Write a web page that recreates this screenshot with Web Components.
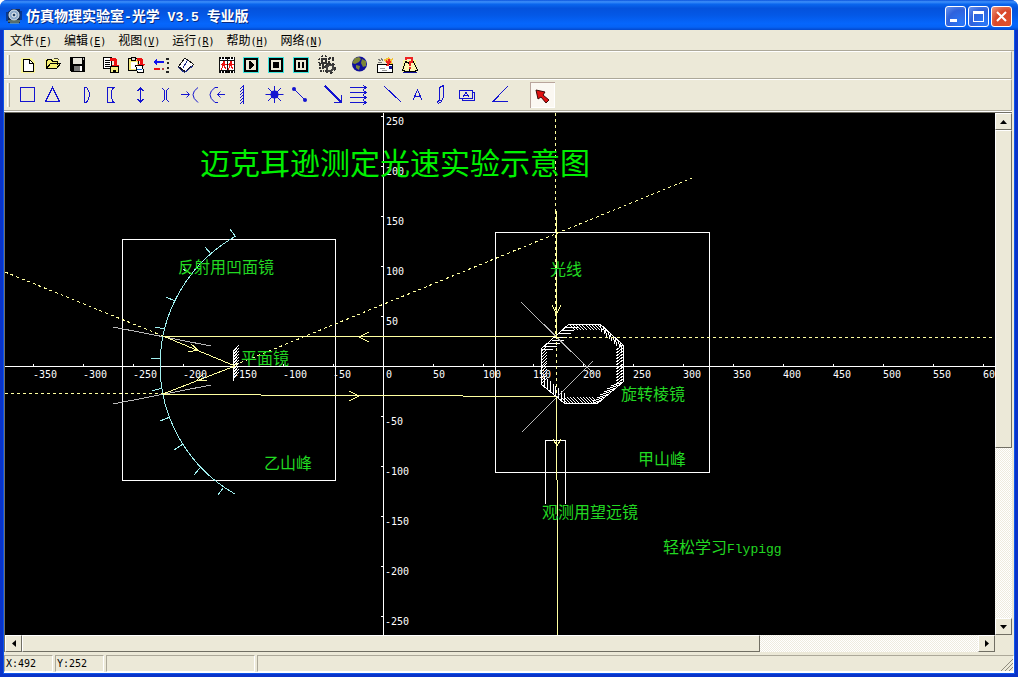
<!DOCTYPE html>
<html lang="zh-CN">
<head>
<meta charset="utf-8">
<title>仿真物理实验室-光学 V3.5 专业版</title>
<style>
html,body{margin:0;height:100%;background:#fff;overflow:hidden}
body{font:12px/16px "Noto Sans CJK SC",sans-serif;color:#000;
  --face:#ece9d8;--shade:#aca899;--dark:#716f64;--light:#fff;--mono:"DejaVu Sans Mono",monospace}
</style>
</head>
<body>
<lab-window>
  <title-bar slot="title">仿真物理实验室<span class="latin">-</span>光学<span class="latin"> V3.5 </span>专业版</title-bar>
  <menu-bar slot="bars">
    <menu-entry key="F">文件</menu-entry>
    <menu-entry key="E">编辑</menu-entry>
    <menu-entry key="V">视图</menu-entry>
    <menu-entry key="R">运行</menu-entry>
    <menu-entry key="H">帮助</menu-entry>
    <menu-entry key="N">网络</menu-entry>
  </menu-bar>
  <tool-strip slot="bars" label="标准" icons="new open save - copy paste step book = film play stop pause gears - globe mail help"></tool-strip>
  <tool-strip slot="bars" class="tall" label="元件" icons="square prism - convex concave . thick thin mirrorin mirrorout plane - sun segment - ray rays - line text pen tag - angle = pointer"></tool-strip>
  <scroll-pane><optics-canvas></optics-canvas></scroll-pane>
  <status-bar slot="status"></status-bar>
</lab-window>

<script>
const define = (name, html, setup) => customElements.define(name, class extends HTMLElement {
  connectedCallback() {
    if (this.shadowRoot) return;
    const t = document.createElement('template');
    t.innerHTML = typeof html === 'function' ? html(this) : html;
    this.attachShadow({mode: 'open'}).append(t.content.cloneNode(true));
    if (setup) setup(this.shadowRoot, this);
  }
});

define('lab-window', `
<style>
:host{display:flex;flex-direction:column;height:100vh;box-sizing:border-box;overflow:hidden;
  border-radius:7px 7px 0 0;background:#0a4ae0}
.body{flex:1;min-height:0;margin:0 4px 4px;display:flex;flex-direction:column;background:var(--face);
  box-shadow:0 0 0 1px #0e55ea,0 0 0 4px #0a33c8}
.view{flex:1;min-height:0;margin:1px 2px 3px 0;display:flex;border:1px solid var(--dark);border-right:0;border-bottom:0}
::slotted(scroll-pane){flex:1}
</style>
<slot name="title"></slot>
<div class="body"><slot name="bars"></slot><div class="view"><slot></slot></div><slot name="status"></slot></div>`);

define('title-bar', `
<style>
:host{display:flex;align-items:center;height:30px;padding:2px 6px 0 6px;box-sizing:border-box;position:relative;z-index:1;
  background:linear-gradient(#0a52dc 0,#3e90fa 6%,#0a66ee 14%,#0452dc 28%,#0458e6 50%,#0566fc 78%,#0563f6 90%,#0348cc 100%)}
h1{flex:1;margin:0 0 0 4px;font:bold 14px/20px "Noto Sans CJK SC",sans-serif;color:#fff;text-shadow:1px 1px #0a2a80;white-space:pre}
::slotted(.latin){font:bold 13px/20px "Liberation Mono",monospace}
button{width:21px;height:21px;margin-left:2px;padding:0;border:1px solid #fff;border-radius:3px;
  background:radial-gradient(circle at 80% 85%,#2a78f8,#2f62dc 60%,#6b95ee)}
button.close{background:radial-gradient(circle at 80% 85%,#e0502a,#d8482a 55%,#ee9a80)}
svg{display:block}
</style>
<svg width="16" height="16" aria-hidden="true"><path d="M2 15V4l4-3h8v14z" fill="#172c50"/><circle cx="8" cy="7" r="5" fill="#8aa8c8" stroke="#dce8f0"/><circle cx="8" cy="7" r="2" fill="#246" stroke="#fff"/><path d="M2 13h12M4 15h9" stroke="#9ab08a"/><path d="M1 4v9M15 3v9" stroke="#0b1838"/></svg>
<h1><slot></slot></h1>
<button aria-label="最小化"><svg width="19" height="19"><path d="M4 12h7v3H4z" fill="#fff"/></svg></button>
<button aria-label="最大化"><svg width="19" height="19"><path d="M4 4h11v11H4zM5 7v7h9V7z" fill="#fff" fill-rule="evenodd"/></svg></button>
<button class="close" aria-label="关闭"><svg width="19" height="19"><path d="M5 5l9 9M14 5l-9 9" stroke="#fff" stroke-width="2"/></svg></button>`);

define('menu-bar', `
<style>:host{display:block;height:20px;border-bottom:1px solid var(--shade)}nav{display:flex}</style>
<nav><slot></slot></nav>`);

define('menu-entry', el => `
<style>
button{height:20px;padding:0 6px;border:0;background:none;color:#000;font:12px/20px "Noto Sans CJK SC",sans-serif;white-space:nowrap}
span{font:10px/20px var(--mono)}u{font-family:inherit}
</style>
<button><slot></slot><span>(<u>${el.getAttribute('key')}</u>)</span></button>`);

const B = '#1414d0';
const boxed = inner => `<path d="M4 4h16v16H4z" fill="#3fe6e0"/><path d="M5 5h14v14H5z" fill="#000"/><path d="M7 7h10v10H7z" fill="#ece9d8"/>${inner}`;
const blue = d => `<path d="${d}" fill="none" stroke="${B}"/>`;
const icons = {
  new: ['新建', `<path d="M6 5h10l4 4v11H6z" fill="#f8f49a"/><path d="M8.5 6.5h6l4 4v8h-10z" fill="#fff" stroke="#000"/><path d="M14.5 6.5v4h4" fill="none" stroke="#000"/>`],
  open: ['打开', `<path d="M5 6h14v9H5z" fill="#f8f49a"/><path d="M6.500 15.500v-8l2-1h3l1 2h5v3M6.500 15.500l4-5h10l-4 5z" fill="#f5ee70" stroke="#000"/><path d="M14 6l3-1 2 2" fill="none" stroke="#443"/>`],
  save: ['保存', `<path d="M5 4h15v15H6l-1-1z" fill="#000"/><path d="M8 5h9v6H8z" fill="#e8e6dc"/><path d="M9 13h6v5H9z" fill="#777"/><path d="M15 13h2v5h-2z" fill="#fff"/><path d="M18 5h1v2h-1z" fill="#bbb"/>`],
  copy: ['复制', `<path d="M5.500 4.500h8v11h-8z" fill="#fff" stroke="#000"/><path d="M7 7h5M7 9h5M7 11h5M7 13h5" stroke="#000"/><path d="M12 5h5l2 2v5h2l-4 4-3-4h2V8h-4z" fill="#e11"/><path d="M12.500 13.500h8v6h-8z" fill="#f4ee80" stroke="#000"/><path d="M15 17h3v3h-3z" fill="#000"/>`],
  paste: ['粘贴', `<path d="M5.500 5.500h10v12h-10z" fill="#f4ea7a" stroke="#000"/><path d="M8.500 4.500h4v3h-4z" fill="#ddd" stroke="#000"/><path d="M8 9h6v7H8z" fill="#fff"/><path d="M14 5h4l2 2v4h2l-4 4-3-4h2V8h-3z" fill="#e11"/><path d="M12.500 12.500l7 0 1 7h-6z" fill="#fff" stroke="#000"/><path d="M14 16h5" stroke="#06c"/>`],
  step: ['单步', `<path d="M5 9l4-4v3h7v2H9v3z" fill="#11e"/><path d="M6 15h6v2H6z" fill="#e11"/><path d="M18 5h3v2h-3zM19 9h2v2h-2zM19 14h2v2h-2zM18 18h3v2h-3z" fill="#222"/><path d="M14 15h2v2h-2z" fill="#a44"/>`],
  book: ['书', `<path d="M5.500 13.500l6-8 3 1 6 5-8 7-2-1z" fill="#fff" stroke="#111"/><path d="M14.500 7.500l-5 8M5.500 14.500l2 2 4 3 9-7" fill="none" stroke="#223088"/>`],
  film: ['影片', `<path d="M5 4h16v16H5z" fill="#fff"/><path d="M5 5h16M5 19h16" stroke="#000" stroke-width="2" stroke-dasharray="2 1"/><path d="M5 7.500h16M5 17.500h16M5.500 4v16M13.500 4v16M20.500 4v16" stroke="#111"/><path d="M9 8h2v2H9zM8 10h3v3H8zM16 8h2v2h-2zM15 10h3v3h-3z" fill="#e11"/><path d="M7 12l2-2M11 11h2M9 13l-2 4M10 13l2 3M14 12l2-2M18 11h2M16 13l-2 4M17 13l2 3" fill="none" stroke="#e11"/>`],
  play: ['运行', boxed('<path d="M10 8h2v1h1v1h1v1h1v2h-1v1h-1v1h-1v1h-2z" fill="#000"/>')],
  stop: ['停止', boxed('<path d="M9 9h6v6H9z" fill="#000"/>')],
  pause: ['暂停', boxed('<path d="M9 9h2v6H9zM13 9h2v6h-2z" fill="#000"/>')],
  gears: ['设置', `<g fill="none" stroke="#333"><circle cx="10" cy="8" r="2.500" stroke-width="2"/><circle cx="10" cy="8" r="5" stroke-width="2" stroke-dasharray="2 2"/><circle cx="16" cy="15" r="3" stroke-width="2" stroke="#444"/><circle cx="16" cy="15" r="5" stroke-width="2" stroke-dasharray="3 2"/><path d="M15 5h6M18 7h3M5 15h6M6 18h4M5 12h5M12 11h8" stroke-dasharray="2 1" stroke-width="2"/></g>`],
  globe: ['网站', `<circle cx="12.500" cy="11" r="7.500" fill="#10109a"/><path d="M8 5l4-1 2 2-2 3-4 2-3-1zM15 6l4 2v5l-3 1-2-4zM9 12l4 1-1 4-3-2z" fill="#7c8638"/>`],
  mail: ['邮件', `<path d="M5.500 11.500h15v8h-15z" fill="#fff" stroke="#000"/><path d="M8 15h5M10 17h5" stroke="#999"/><path d="M17 13h3v3h-3z" fill="#119"/><path d="M12 6l3-1 1-1 2 2 3-1-1 4 1 2h-5l-3-2z" fill="#f2c238"/><path d="M14 8l3 2-2 3M17 6l1 4" stroke="#e22" stroke-width="2" fill="none"/><path d="M6 6l3 2M6 9h4M9 5l2 3" stroke="#777"/>`],
  help: ['帮助主题', `<path d="M6 7h13l1 12H5z" fill="#fbf7a0"/><path d="M5.500 17.500l3-9 4 2 4-2 4 9-4 1h-7z" fill="#fdf8b0" stroke="#000"/><path d="M6 19.500h14" stroke="#119"/><path d="M12.500 14v5" stroke="#000"/><path d="M9 7V5h6v4h-2v4M12 15h2" fill="none" stroke="#e22" stroke-width="2"/>`],
  square: ['矩形', blue('M5.500 4.500h14v14h-14z')],
  prism: ['三棱镜', blue('M12.500 4.500l7 14h-14z')],
  convex: ['凸透镜', blue('M10.500 4.500h2q6 7 0 15h-2z')],
  concave: ['凹透镜', blue('M15.500 4.500h-7v15h7M14.500 4.500q-5 7 0 15')],
  thick: ['薄凸透镜', blue('M12.500 5v14M9.500 8l3-3 3 3M9.500 16l3 3 3-3')],
  thin: ['薄凹透镜', blue('M9.500 5l2 3v8l-2 3M15.500 5l-2 3v8l2 3')],
  mirrorin: ['凸面镜', blue('M3 11.500h8M8.500 8.500l3 3-3 3M20 4.500q-10 7 0 15')],
  mirrorout: ['凹面镜', blue('M15 4.500h-3q-10 7 0 15h3M22 11.500h-8M17.500 8.500l-3 3 3 3')],
  plane: ['平面镜', blue('M15.500 2v19M12 6l4-4M12 9l4-4M12 12l4-4M12 15l4-4M12 18l4-4M12 21l4-4')],
  sun: ['点光源', `<circle cx="12.500" cy="11.500" r="4" fill="${B}"/>` + blue('M12.500 3v17M3.500 11.500h18M6 5l13 13M19 5l-13 13')],
  segment: ['线段光源', `<path d="M7 6l11 11" stroke="${B}"/><circle cx="7" cy="6" r="2" fill="${B}"/><circle cx="18" cy="17" r="2" fill="${B}"/>`],
  ray: ['光线', `<path d="M4 3l16 16" fill="none" stroke="${B}" stroke-width="2"/>` + blue('M20.500 12v7.500h-8')],
  rays: ['平行光', blue('M4 4.500h17M4 9.500h17M4 14.500h17M4 19.500h17M17 2l3 2.500-3 2.500M17 7l3 2.500-3 2.500M17 12l3 2.500-3 2.500M17 17l3 2.500-3 2.500')],
  line: ['直线', blue('M4 3l17 16')],
  text: ['文字', blue('M8 17l4.500-10L17 17M10 13.500h6')],
  pen: ['画笔', blue('M9.500 4.500l4-2v12l-2 3h-2zM9 17.500l-2 2M8 20.500l4-2')],
  tag: ['标签', blue('M4.500 7.500h13v8h-13zM17.500 9.500h2v8h-12v-2M8 14l3-5 3 5M9 12.500h4')],
  angle: ['角度', blue('M19 3L4 18.500h15')],
  pointer: ['选择', `<path d="M6 7l9 2-2 3 6 5-3 3-5-6-3 2z" fill="#e01212" stroke="#3a0808"/>`]
};

define('tool-button', el => {
  const [label, art] = icons[el.getAttribute('icon')];
  return `<style>
:host{display:block}
button{display:block;width:25px;height:24px;padding:0;border:0;background:none}
:host([icon=pointer]) button{height:26px;background:#fbf8f2;box-shadow:inset 1px 1px #b9a59c,inset -1px -1px #fff}
svg{display:block}
</style><button aria-label="${label}"><svg width="25" height="24" shape-rendering="${/sun|globe|pointer|mirror|segment/.test(el.getAttribute('icon')) ? 'auto' : 'crispEdges'}">${art}</svg></button>`;
});

const gaps = {'.': 'small', '-': 'medium', '=': 'large'};
define('tool-strip', el => `
<style>
:host{display:block;height:26px;margin-right:2px;border-top:1px solid #fff;border-bottom:1px solid var(--shade);border-right:1px solid var(--shade);--gap:8px}
:host(.tall){height:30px;box-shadow:0 1px #fff;--gap:9px}
div{display:flex;align-items:center;height:100%}
i{width:1px;height:80%;margin:0 5px 0 3px;border-left:1px solid #fff;border-right:1px solid var(--shade)}
.small{width:4px}.medium{width:var(--gap)}.large{width:16px}
</style>
<div role="toolbar" aria-label="${el.getAttribute('label')}"><i></i>${el.getAttribute('icons').split(' ').map(n => gaps[n] ? `<span class="${gaps[n]}"></span>` : `<tool-button icon="${n}"></tool-button>`).join('')}</div>`);

define('scroll-pane', `
<style>
:host{display:grid;grid-template:minmax(0,1fr) 17px / minmax(0,1fr) 17px;min-width:0;min-height:0}
.view{display:grid;overflow:hidden;background:#000}
.bar{display:flex;background:repeating-conic-gradient(#fff 0 25%,#eeebdf 0 50%) 0 0/2px 2px}
.v{flex-direction:column}
button,.thumb{box-sizing:border-box;background:var(--face);border:1px solid;border-color:#fff var(--dark) var(--dark) #fff}
button{flex:none;width:17px;height:17px;padding:0}
.track{flex:1;display:flex;flex-direction:inherit}
.h .thumb{width:77.2%}.v .thumb{height:65.2%}
svg{display:block;margin:0 auto}
</style>
<div class="view"><slot></slot></div>
<div class="bar v"><button aria-label="向上"><svg width="7" height="4"><path d="M0 4l3.500-4L7 4z"/></svg></button><div class="track"><div class="thumb"></div></div><button aria-label="向下"><svg width="7" height="4"><path d="M0 0l3.500 4L7 0z"/></svg></button></div>
<div class="bar h"><button aria-label="向左"><svg width="4" height="7"><path d="M4 0L0 3.500 4 7z"/></svg></button><div class="track"><div class="thumb"></div></div><button aria-label="向右"><svg width="4" height="7"><path d="M0 0l4 3.500L0 7z"/></svg></button></div>`);

define('optics-canvas', () => {
  // Every coordinate is relative to the origin of the axes, y pointing down.
  let ticks = '', nums = '';
  for (let v = -350; v <= 600; v += 50) {
    if (v) ticks += `M${v} 0v-3`;
    nums += `<text x="${v || 3}" y="12">${v}</text>`;
  }
  for (let v = -250; v <= 250; v += 50) {
    if (!v) continue;
    ticks += `M0 ${-v}h-3`;
    nums += `<text x="${v < 0 ? 2 : 3}" y="${-v + 9}">${v}</text>`;
  }
  // Octagonal prism: the mirrored side of each face is hatched inwards.
  const pts = [[186,-42],[217,-42],[240,-21],[240,16],[215,37],[181,37],[158,18],[158,-17]];
  const dir = [[6,6],[2,8],[-7,5],[-12,4],[-6,-6],[0,-10],[6,-6],[12,0]];
  const steps = [10, 9, 12, 7, 11, 8, 12, 8];
  let hatch = '';
  pts.forEach((p, i) => {
    const q = pts[(i + 1) % 8], n = steps[i];
    for (let k = 0; k < n; k++)
      hatch += `M${Math.round(p[0] + (q[0] - p[0]) * k / n)} ${Math.round(p[1] + (q[1] - p[1]) * k / n)}l${dir[i]}`;
  });
  let plane = '';
  for (let y = -14; y <= 14; y += 3) plane += `M-150 ${y}l6 -7`;
  return `<style>
:host{display:block;min-width:0;min-height:0;overflow:hidden}
svg{display:block;width:100%;height:100%}
.w,.y,.g,.c{fill:none;stroke:#fff}
.y{stroke:#ffffa0}.g{stroke:#b8b8b8}.c{stroke:#a0f0f0}
.d{stroke-dasharray:3 3}
.num{font:10px var(--mono);fill:#fff}
.lab{font:16px "Noto Sans CJK SC",sans-serif;fill:#22d822}
.lat{font:13px "Liberation Mono",monospace}
.head{font:30px "Noto Sans CJK SC",sans-serif;fill:#00f000}
</style>
<svg role="img" aria-label="光路图"><g transform="translate(378 253)">
<g shape-rendering="crispEdges">
<path class="w" d="M-2000 .5H3000M.5 -1000V1000"/><path class="w" d="${ticks}" transform="translate(.5 .5)"/>
<path class="w" d="M-260.500 -126.500h213v241h-213zM112.500 -133.500h214v240h-214zM162.500 138V74.500H182.500V138"/>
<path class="w" d="${hatch}"/><path class="w" d="M${pts.join('L')}Z"/>
<path class="w" d="M-149.500 -16v31${plane}"/>
<path class="g" d="M138 -64L210 7M139 66L210 -5M-270 -39L-172 -20M-270 38L-172 19"/>
<path class="c" d="M-147 -130A148 148 0 0 0 -148 128M-148 -130l-5 -7M-172 -112l-6 -7M-192 -92l-8 -5M-208 -65l-9 -4M-218 -37l-10 -2M-222 -8h-10M-221 22l-10 3M-213 51l-10 4M-200 78l-9 6M-183 102l-6 7M-160 122l-5 7"/>
<path class="y d" d="M172.500 -253V-155M172.500 -155V-30M173.500 -28.500H3000M173.500 -30V30M-148 -1L309 -188M-378 -94L-220 -30M-378 27.500H-220"/>
<path class="y" d="M173.500 -155V-29M-220 -29.500H173M-220 -30L-148 0L-220 28M-220 28.500H-122M-122 29.500H80M80 30.500H173M173.500 31V114M174.500 114V1000"/>
<path class="y" d="M169 -61l4.500 9 4.500 -9M-14 -34l-10 5 10 5M-34 25l10 5 -10 5M170 73l4 7 4 -7M-192 -22l7 6 -10 2M-180 8l-6 6 10 1"/>
</g>
<g class="num">${nums}</g>
<text class="head" x="-183" y="-192">迈克耳逊测定光速实验示意图</text>
<g class="lab">
<text x="-205" y="-93">反射用凹面镜</text><text x="-142" y="-2">平面镜</text><text x="-119" y="103">乙山峰</text>
<text x="167" y="-91">光线</text><text x="238" y="34">旋转棱镜</text><text x="255" y="99">甲山峰</text>
<text x="159" y="152">观测用望远镜</text><text x="280" y="187">轻松学习<tspan class="lat">Flypigg</tspan></text>
</g></g></svg>`;
});

define('status-bar', `
<style>
:host{display:flex;gap:2px;height:17px;background:var(--face);border-bottom:1px solid #fff}
div{box-sizing:border-box;width:49px;padding-left:1px;border:1px solid;border-color:var(--shade) #fff #fff var(--shade);font:10px/16px var(--mono)}
.mid{width:149px}.rest{flex:1;display:flex;justify-content:flex-end;align-items:flex-end}
</style>
<div>X:492</div><div>Y:252</div><div class="mid"></div>
<div class="rest"><svg width="12" height="12" aria-hidden="true"><path d="M0 12L12 0M4 12l8-8M8 12l4-4" stroke="#8f8c7e"/></svg></div>`);
</script>
</body>
</html>
